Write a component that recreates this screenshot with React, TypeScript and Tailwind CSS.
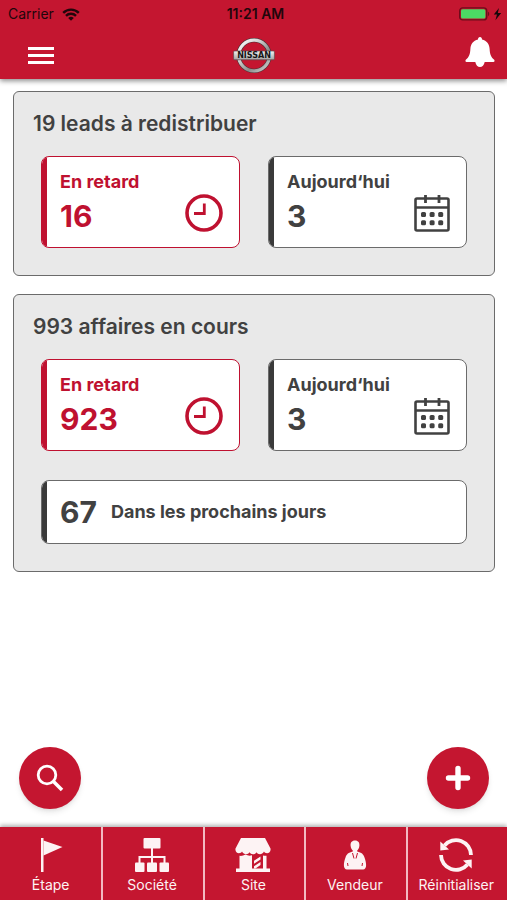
import type { ReactNode } from 'react';

type Tone = 'late' | 'normal';

const toneText: Record<Tone, string> = {
  late: 'text-[#bf1130]',
  normal: 'text-[#414141]',
};

const toneBorder: Record<Tone, string> = {
  late: 'border-[#bf1130]',
  normal: 'border-[#6b6b6b]',
};

const toneBar: Record<Tone, string> = {
  late: 'bg-[#bf1130]',
  normal: 'bg-[#3a3a3a]',
};

function WifiIcon() {
  return (
    <svg viewBox="0 0 18 13" className="h-[13px] w-[18px]" fill="none" stroke="currentColor" strokeWidth="2.4" aria-hidden="true">
      <path d="M1.2 4.9a11 11 0 0 1 15.6 0" />
      <path d="M4 7.8a7 7 0 0 1 10 0" />
      <path d="M9 12.8 6.2 10a4 4 0 0 1 5.6 0z" fill="currentColor" stroke="none" />
    </svg>
  );
}

function BatteryIcon() {
  return (
    <svg viewBox="0 0 44 14" className="h-[14px] w-[44px]" aria-hidden="true">
      <rect x="0.7" y="0.9" width="27" height="12" rx="3" fill="none" stroke="#6d0c1b" strokeWidth="1.4" />
      <rect x="2" y="2.2" width="24.4" height="9.4" rx="1.5" fill="#4cd964" />
      <path d="M29 4.8c1.6.6 1.6 3.8 0 4.4z" fill="#6d0c1b" />
      <path d="M40 1 34.8 7.6h3.2l-1.6 5.6L42.2 6h-3.4z" fill="#14080a" />
    </svg>
  );
}

function BrandLogo() {
  return (
    <svg viewBox="0 0 42 36" className="h-9 w-[42px]" role="img" aria-label="Nissan">
      <defs>
        <linearGradient id="chrome" x1="0" y1="0" x2="1" y2="1">
          <stop offset="0" stopColor="#ffffff" />
          <stop offset="0.35" stopColor="#d2d2d2" />
          <stop offset="0.65" stopColor="#8b8b8b" />
          <stop offset="1" stopColor="#d9d9d9" />
        </linearGradient>
        <linearGradient id="plate" x1="0" y1="0" x2="0" y2="1">
          <stop offset="0" stopColor="#f4f4f4" />
          <stop offset="1" stopColor="#a3a3a3" />
        </linearGradient>
      </defs>
      <circle cx="21" cy="17.5" r="15.4" fill="none" stroke="#4b3437" strokeWidth="4.4" />
      <circle cx="21" cy="17.5" r="15.4" fill="none" stroke="url(#chrome)" strokeWidth="3.2" />
      <rect x="0.6" y="13" width="40.8" height="8.8" rx="1" fill="url(#plate)" stroke="#5c4a4c" strokeWidth="0.7" />
      <text x="21" y="20.3" textAnchor="middle" fontSize="8" fontWeight="700" fontFamily="DejaVu Sans, sans-serif" fill="#161616">
        NISSAN
      </text>
    </svg>
  );
}

function BellIcon() {
  return (
    <svg viewBox="0 0 30 30" className="size-[30px]" fill="currentColor" aria-hidden="true">
      <path d="M15 0c1.3 0 2 1 2 2.4 4.8 1 7.3 4.6 7.6 9.3.3 5.6 1.3 8.2 4.6 11 .7.7.4 2.3-.8 2.3H19.700c-.6 3-2.4 5-4.700 5s-4.100-2-4.700-5H1.600C.4 25 .1 23.400.8 22.700c3.300-2.800 4.300-5.400 4.600-11C5.700 7 8.200 3.400 13 2.400 13 1 13.700 0 15 0z" />
    </svg>
  );
}

function ClockIcon() {
  return (
    <svg viewBox="0 0 38 38" className="size-[38px]" fill="none" stroke="currentColor" aria-hidden="true">
      <circle cx="19" cy="19" r="17" strokeWidth="3.6" />
      <path d="M19.3 9.5v10H9" strokeWidth="2.8" />
    </svg>
  );
}

function CalendarIcon() {
  return (
    <svg viewBox="0 0 36 38" className="h-[38px] w-9" fill="none" stroke="currentColor" aria-hidden="true">
      <rect x="1.5" y="4.5" width="33" height="32" rx="1.5" strokeWidth="2.6" />
      <path d="M1.5 13.5h33" strokeWidth="2.4" />
      <path d="M11.5 1v8M25 1v8" strokeWidth="2.8" />
      <g fill="currentColor" stroke="none">
        <rect x="7" y="18" width="5" height="5" rx="1.5" />
        <rect x="15.6" y="18" width="5" height="5" rx="1.5" />
        <rect x="24.2" y="18" width="5" height="5" rx="1.5" />
        <rect x="7" y="26.2" width="5" height="5" rx="1.5" />
        <rect x="15.6" y="26.2" width="5" height="5" rx="1.5" />
        <rect x="24.2" y="26.2" width="5" height="5" rx="1.5" />
      </g>
    </svg>
  );
}

function FlagIcon() {
  return (
    <svg viewBox="0 0 36 36" className="size-9" fill="currentColor" aria-hidden="true">
      <path d="M8 1h2.5v34H8z" />
      <path d="M10.5 3.5 29.5 10l-19 8.500z" />
    </svg>
  );
}

function OrgIcon() {
  return (
    <svg viewBox="0 0 36 36" className="size-9" fill="currentColor" aria-hidden="true">
      <rect x="9.5" y="1" width="17" height="10.5" rx="1" />
      <path d="M17 11h2v8h12.5v7h-2v-5H19v5h-2v-5H6.5v5h-2v-7H17z" />
      <rect x="1" y="25.5" width="9.5" height="9.5" rx="1" />
      <rect x="13" y="25.5" width="10" height="9.5" rx="1" />
      <rect x="25.5" y="25.5" width="9.5" height="9.5" rx="1" />
    </svg>
  );
}

function StoreIcon() {
  return (
    <svg viewBox="0 0 36 36" className="size-9" fill="currentColor" aria-hidden="true">
      <path d="M6 1h24l5.5 10.5c.5 3-1.3 4.7-3.4 4.7-1.6 0-2.6-.8-3.1-1.7-1 2-2.5 2.7-4 2.7s-2.9-.8-3.5-2c-.7 1.200-2 2-3.500 2s-2.800-.8-3.500-2c-.6 1.200-2 2-3.500 2s-3-.7-4-2.700c-.5.900-1.500 1.700-3.100 1.700C1.800 16.200 0 14.500.5 11.500z" />
      <path d="M4.500 18.800c2 .3 4-.1 6-1.300 2 1.200 4.200 1.500 6.500.8v13.200h11V18.500c1.300.4 2.500.4 3.500.2v12.800H35V35H1v-3.500h3.500z" />
      <path d="m19 23.800 6.500-4.300v3L19 26.800zM19 29.300l6.500-4.300v3L20.500 31.500H19z" />
    </svg>
  );
}

function SellerIcon() {
  return (
    <svg viewBox="0 0 36 36" className="size-9" aria-hidden="true">
      <path
        d="M18 3.500c3.400 0 4.700 2.400 4.400 5.200-.3 2.400-1.200 3.900-2.200 4.800v1c4.400 1 6.200 2.700 7.300 5.900 1 2.800 1.600 5.200 1.600 7.900 0 2.700-1.200 4.200-3 4.200H9.900c-1.800 0-3-1.500-3-4.200 0-2.700.6-5.100 1.600-7.900 1.100-3.200 2.900-4.900 7.300-5.900v-1c-1-.9-1.900-2.400-2.200-4.800-.3-2.800 1-5.200 4.400-5.200z"
        fill="currentColor"
      />
      <path d="m15.500 16 1.500 5.500M20.500 16 19 21.500" stroke="#c41630" strokeWidth="1" />
      <path d="m10.500 26 .5 3M25.500 26l-.5 3" stroke="#c41630" strokeWidth="1" />
    </svg>
  );
}

function ResetIcon() {
  return (
    <svg viewBox="0 0 36 36" className="size-9" fill="none" stroke="currentColor" strokeWidth="3.8" aria-hidden="true">
      <path d="M6.500 8.500A15 15 0 0 1 33 18" />
      <path d="M3 18a15 15 0 0 0 26.500 9.500" />
      <path d="M2.300 4.500v9l8.700-1zM33.700 22.500v9L25 23.500z" fill="currentColor" stroke="none" />
    </svg>
  );
}

interface CardProps {
  tone: Tone;
  children: ReactNode;
}

function Card({ tone, children }: CardProps) {
  return (
    <a href="#" className={`flex min-w-0 flex-1 overflow-hidden rounded-lg border bg-white ${toneBorder[tone]} ${toneText[tone]}`}>
      <span className={`w-[5px] shrink-0 ${toneBar[tone]}`} />
      {children}
    </a>
  );
}

interface StatCardProps {
  tone: Tone;
  label: string;
  value: number;
}

function StatCard({ tone, label, value }: StatCardProps) {
  return (
    <Card tone={tone}>
      <span className="flex flex-1 items-end justify-between py-[13px] pr-4 pl-[13px]">
        <span className="flex flex-col gap-1">
          <span className="text-lg leading-6 font-bold">{label}</span>
          <span className="text-[30px] leading-9 font-bold">{value}</span>
        </span>
        <span className="pb-0.5">{tone === 'late' ? <ClockIcon /> : <CalendarIcon />}</span>
      </span>
    </Card>
  );
}

interface PanelProps {
  title: string;
  late: number;
  today: number;
  children?: ReactNode;
}

function Panel({ title, late, today, children }: PanelProps) {
  return (
    <section className="rounded-md border border-[#6b6b6b] bg-[#e9e9e9] px-[27px] pb-[27px]">
      <h2 className="-ml-2 pt-[18px] pb-[18px] text-[21px] leading-7 font-semibold text-[#414141]">{title}</h2>
      <div className="flex gap-7">
        <StatCard tone="late" label="En retard" value={late} />
        <StatCard tone="normal" label="Aujourd‘hui" value={today} />
      </div>
      {children}
    </section>
  );
}

const tabs = [
  { label: 'Étape', icon: <FlagIcon /> },
  { label: 'Société', icon: <OrgIcon /> },
  { label: 'Site', icon: <StoreIcon /> },
  { label: 'Vendeur', icon: <SellerIcon /> },
  { label: 'Réinitialiser', icon: <ResetIcon /> },
];

export default function App() {
  return (
    <div className="flex min-h-screen flex-col bg-white font-['Inter',sans-serif]">
      <header className="bg-[#c41630] shadow-[0_2px_5px_rgba(0,0,0,0.45)]">
        <div className="grid h-7 grid-cols-3 items-center pr-1 pl-2 text-sm text-[#21060b]">
          <span className="flex items-center gap-2">
            Carrier
            <WifiIcon />
          </span>
          <span className="text-center font-semibold">11:21 AM</span>
          <span className="flex justify-end">
            <BatteryIcon />
          </span>
        </div>
        <div className="grid h-[51px] grid-cols-[1fr_auto_1fr] items-center pt-1 pr-3 pl-7 text-white">
          <button type="button" aria-label="Menu" className="flex w-[26px] flex-col gap-1">
            <span className="h-[3px] bg-white" />
            <span className="h-[3px] bg-white" />
            <span className="h-[3px] bg-white" />
          </button>
          <span className="-ml-4">
            <BrandLogo />
          </span>
          <button type="button" aria-label="Notifications" className="justify-self-end pb-2">
            <BellIcon />
          </button>
        </div>
      </header>

      <main className="flex flex-1 flex-col gap-[18px] pt-3 pr-3 pl-[13px]">
        <Panel title="19 leads à redistribuer" late={16} today={3} />
        <Panel title="993 affaires en cours" late={923} today={3}>
          <div className="mt-[29px] flex">
            <Card tone="normal">
              <span className="flex items-center gap-[14px] py-[13px] pl-[13px]">
                <span className="text-[30px] leading-9 font-bold">67</span>
                <span className="text-lg leading-6 font-bold">Dans les prochains jours</span>
              </span>
            </Card>
          </div>
        </Panel>
      </main>

      <div className="flex justify-between pr-[18px] pb-[18px] pl-[19px] text-white">
        <button type="button" aria-label="Rechercher" className="flex size-[62px] items-center justify-center rounded-full bg-[#c41630] shadow-md">
          <svg viewBox="0 0 28 28" className="size-7" fill="none" stroke="currentColor" aria-hidden="true">
            <circle cx="11" cy="11" r="8.8" strokeWidth="2.8" />
            <path d="m17.5 17.5 8.5 8.5" strokeWidth="3.6" />
          </svg>
        </button>
        <button type="button" aria-label="Ajouter" className="flex size-[62px] items-center justify-center rounded-full bg-[#c41630] shadow-md">
          <svg viewBox="0 0 26 26" className="size-[26px]" stroke="currentColor" strokeWidth="5.4" strokeLinecap="round" aria-hidden="true">
            <path d="M13 3.5v19M3.5 13h19" />
          </svg>
        </button>
      </div>

      <nav className="grid grid-cols-5 bg-[#c41630] text-[#fdf3f4] shadow-[0_-2px_4px_rgba(0,0,0,0.3)]">
        {tabs.map((tab) => (
          <button
            key={tab.label}
            type="button"
            className="flex flex-col items-center gap-[3px] border-l-2 border-[#f3b9c1] pt-[10px] pr-0.5 pb-[6px] first:border-transparent"
          >
            {tab.icon}
            <span className="text-sm leading-[18px]">{tab.label}</span>
          </button>
        ))}
      </nav>
    </div>
  );
}
